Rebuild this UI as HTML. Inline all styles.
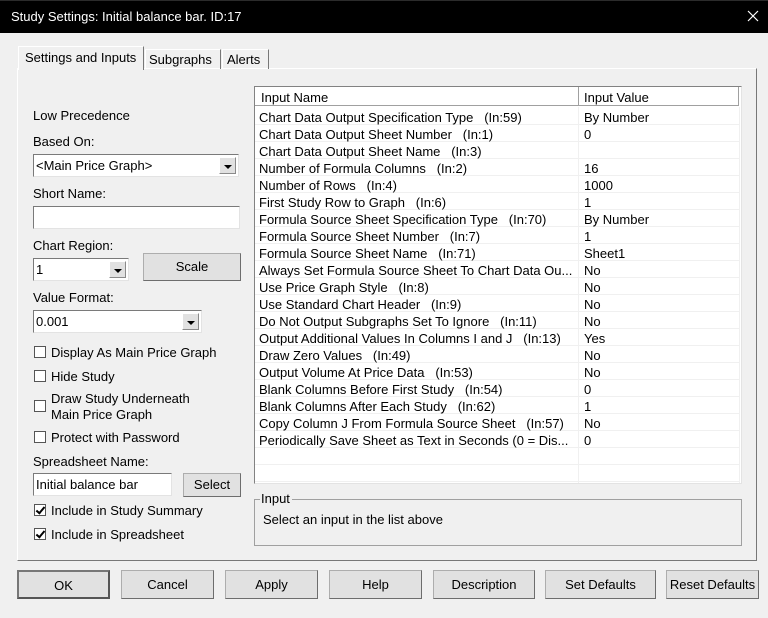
<!DOCTYPE html>
<html><head><style>
*{margin:0;padding:0;box-sizing:border-box}
body{width:768px;height:618px;background:#f0f0f0;position:relative;overflow:hidden;font-family:"Liberation Sans",Arial,sans-serif;font-size:13px;color:#000}
.a{position:absolute;white-space:nowrap}
.t{position:absolute;white-space:nowrap;line-height:16px}
.box{position:absolute;background:#fff;border:1px solid #7a7a7a;border-right-color:#e3e3e3;border-bottom-color:#e3e3e3}
.btn{position:absolute;background:#e1e1e1;border:1px solid #adadad;border-right-color:#6d6d6d;border-bottom-color:#6d6d6d;text-align:center;font-size:13px}
.dd{position:absolute;top:2px;right:2px;width:17px;bottom:2px;background:#e1e1e1;border:1px solid #8a8a8a;border-top-color:#fff;border-left-color:#fff}
.dd:after{content:"";position:absolute;left:4px;top:7px;border-left:4px solid transparent;border-right:4px solid transparent;border-top:4px solid #000}
.cb{position:absolute;width:12px;height:12px;background:#fff;border:1px solid #555}
.cb.k:after{content:"";position:absolute;left:3px;top:0px;width:3px;height:7px;border:solid #000;border-width:0 2px 2px 0;transform:rotate(40deg)}
.row{position:absolute;left:255px;width:485px;height:17px;border-bottom:1px solid #f0f0f0}
.row span{position:absolute;top:2px;line-height:15px}
</style></head><body>
<div class="a" style="left:0;top:0;width:768px;height:33px;background:#000;border-top:1px solid #2b2b2b"></div>
<div class="t" style="left:11px;top:9px;color:#fff;font-size:13px">Study Settings: Initial balance bar. ID:17</div>
<svg class="a" style="left:747px;top:10px" width="12" height="12"><path d="M1 1L11 11M11 1L1 11" stroke="#fff" stroke-width="1.2"/></svg>

<div class="a" style="left:17px;top:68px;width:740px;height:493px;border:1px solid #fff;border-right-color:#777;border-bottom-color:#777"></div>
<div class="a" style="left:18px;top:46px;width:126px;height:24px;background:#f0f0f0;border:1px solid #fff;border-right-color:#777;border-bottom:none"></div>
<div class="t" style="left:25px;top:50px">Settings and Inputs</div>
<div class="a" style="left:145px;top:49px;width:76px;height:20px;border:1px solid #fff;border-right-color:#777;border-bottom:none"></div>
<div class="t" style="left:149px;top:52px">Subgraphs</div>
<div class="a" style="left:222px;top:49px;width:47px;height:20px;border:1px solid #fff;border-right-color:#777;border-bottom:none"></div>
<div class="t" style="left:227px;top:52px">Alerts</div>

<div class="t" style="left:33px;top:108px">Low Precedence</div>
<div class="t" style="left:33px;top:134px">Based On:</div>
<div class="box" style="left:33px;top:154px;width:206px;height:23px"><div class="t" style="left:2px;top:3px">&lt;Main Price Graph&gt;</div><div class="dd"></div></div>
<div class="t" style="left:33px;top:186px">Short Name:</div>
<div class="box" style="left:33px;top:206px;width:207px;height:23px"></div>
<div class="t" style="left:33px;top:238px">Chart Region:</div>
<div class="box" style="left:33px;top:258px;width:96px;height:23px"><div class="t" style="left:2px;top:3px">1</div><div class="dd"></div></div>
<div class="btn" style="left:143px;top:253px;width:98px;height:28px;line-height:26px">Scale</div>
<div class="t" style="left:33px;top:290px">Value Format:</div>
<div class="box" style="left:33px;top:310px;width:169px;height:23px"><div class="t" style="left:2px;top:3px">0.001</div><div class="dd"></div></div>
<div class="cb" style="left:34px;top:346px"></div><div class="t" style="left:51px;top:345px">Display As Main Price Graph</div>
<div class="cb" style="left:34px;top:370px"></div><div class="t" style="left:51px;top:369px">Hide Study</div>
<div class="cb" style="left:34px;top:400px"></div><div class="t" style="left:51px;top:391px">Draw Study Underneath</div><div class="t" style="left:51px;top:407px">Main Price Graph</div>
<div class="cb" style="left:34px;top:431px"></div><div class="t" style="left:51px;top:430px">Protect with Password</div>
<div class="t" style="left:33px;top:454px">Spreadsheet Name:</div>
<div class="box" style="left:33px;top:473px;width:139px;height:23px"><div class="t" style="left:2px;top:3px">Initial balance bar</div></div>
<div class="btn" style="left:183px;top:473px;width:58px;height:24px;line-height:22px">Select</div>
<div class="cb k" style="left:34px;top:504px"></div><div class="t" style="left:51px;top:503px">Include in Study Summary</div>
<div class="cb k" style="left:34px;top:528px"></div><div class="t" style="left:51px;top:527px">Include in Spreadsheet</div>

<div class="a" style="left:254px;top:86px;width:488px;height:398px;background:#fff;border:1px solid #828282;border-right-color:#e3e3e3;border-bottom-color:#e3e3e3"></div>
<div class="a" style="left:255px;top:87px;width:324px;height:19px;border-right:1px solid #a0a0a0;border-bottom:1px solid #a0a0a0"></div>
<div class="a" style="left:579px;top:87px;width:160px;height:19px;border-right:1px solid #a0a0a0;border-bottom:1px solid #a0a0a0"></div>
<div class="t" style="left:261px;top:90px">Input Name</div>
<div class="t" style="left:584px;top:90px">Input Value</div>
<div class="a" style="left:578px;top:107px;width:1px;height:376px;background:#f0f0f0"></div>
<div class="a" style="left:739px;top:107px;width:1px;height:376px;background:#f0f0f0"></div>
<div id="rows"></div>

<div class="a" style="left:254px;top:499px;width:488px;height:47px;border:1px solid #a0a0a0"></div>
<div class="t" style="left:260px;top:491px;background:#f0f0f0;padding:0 2px 0 1px">Input</div>
<div class="t" style="left:263px;top:512px">Select an input in the list above</div>

<div class="btn" style="left:17px;top:570px;width:93px;height:29px;line-height:27px;border:2px solid #555;border-top-color:#777;border-left-color:#777">OK</div>
<div class="btn" style="left:121px;top:570px;width:93px;height:29px;line-height:27px">Cancel</div>
<div class="btn" style="left:225px;top:570px;width:93px;height:29px;line-height:27px">Apply</div>
<div class="btn" style="left:329px;top:570px;width:93px;height:29px;line-height:27px">Help</div>
<div class="btn" style="left:433px;top:570px;width:102px;height:29px;line-height:27px">Description</div>
<div class="btn" style="left:545px;top:570px;width:111px;height:29px;line-height:27px">Set Defaults</div>
<div class="btn" style="left:666px;top:570px;width:93px;height:29px;line-height:27px">Reset Defaults</div>

<script>
var d=[["Chart Data Output Specification Type","59","By Number"],["Chart Data Output Sheet Number","1","0"],["Chart Data Output Sheet Name","3",""],["Number of Formula Columns","2","16"],["Number of Rows","4","1000"],["First Study Row to Graph","6","1"],["Formula Source Sheet Specification Type","70","By Number"],["Formula Source Sheet Number","7","1"],["Formula Source Sheet Name","71","Sheet1"],["Always Set Formula Source Sheet To Chart Data Ou...","","No"],["Use Price Graph Style","8","No"],["Use Standard Chart Header","9","No"],["Do Not Output Subgraphs Set To Ignore","11","No"],["Output Additional Values In Columns I and J","13","Yes"],["Draw Zero Values","49","No"],["Output Volume At Price Data","53","No"],["Blank Columns Before First Study","54","0"],["Blank Columns After Each Study","62","1"],["Copy Column J From Formula Source Sheet","57","No"],["Periodically Save Sheet as Text in Seconds (0 = Dis...","","0"],["","",""],["","",""]];
var h="";d.forEach(function(r,i){var n=r[0]+(r[1]?"&nbsp;&nbsp;&nbsp;(In:"+r[1]+")":"");h+='<div class="row" style="top:'+(108+i*17)+'px"><span style="left:4px">'+n+'</span><span style="left:329px">'+r[2]+'</span></div>';});
document.getElementById("rows").innerHTML=h;
</script>
</body></html>
